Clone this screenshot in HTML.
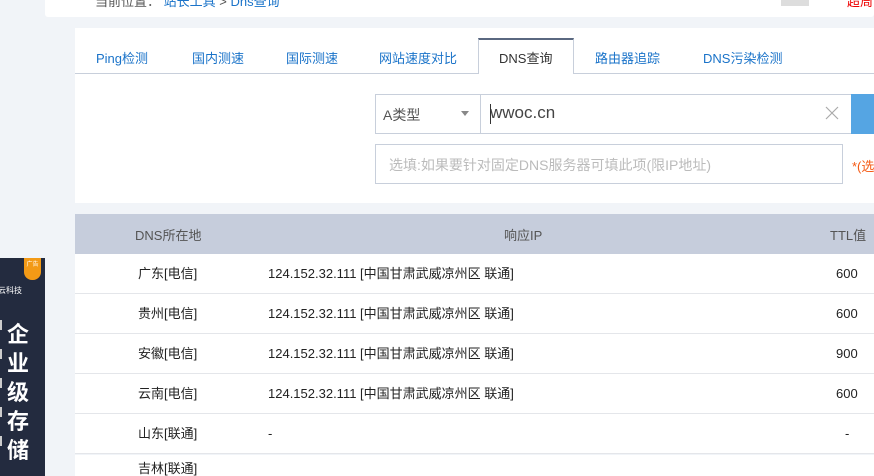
<!DOCTYPE html>
<html><head><meta charset="utf-8"><style>
*{margin:0;padding:0;box-sizing:border-box}
html,body{width:874px;height:476px;overflow:hidden}
body{background:#f1f4f8;font-family:"Liberation Sans","Noto Sans CJK SC",sans-serif;position:relative;font-size:13px;color:#333;white-space:nowrap}
.a{position:absolute}
.card{background:#fff}
.tab{position:absolute;top:48px;font-size:13px;color:#1a73c9}
.row{position:absolute;left:75px;width:799px;height:40px;background:#fff;border-bottom:1px solid #e4e6ea;font-size:13px;color:#222}
.row span{position:absolute;top:0;line-height:39px}
</style></head><body>
<div class="a card" style="left:45px;top:-10px;width:829px;height:27px;border-radius:3px"></div>
<div class="a" style="left:95px;top:-9px;font-size:13px;color:#555">当前位置： <span style="color:#1a73c9">站长工具</span> &gt; <span style="color:#1a73c9">Dns查询</span></div>
<div class="a" style="left:781px;top:-8px;width:28px;height:14px;background:#ddd"></div>
<div class="a" style="left:847px;top:-9px;color:#e00;font-size:13px">超周</div>

<div class="a card" style="left:75px;top:28px;width:799px;height:175px"></div>
<div class="a" style="left:75px;top:73px;width:799px;height:1px;background:#c8cfdb"></div>
<div class="a" style="left:478px;top:38px;width:96px;height:36px;background:#fff;border:1px solid #c8cfdb;border-top:2px solid #5a6880;border-bottom:none"></div>
<div class="tab" style="left:96px">Ping检测</div>
<div class="tab" style="left:192px">国内测速</div>
<div class="tab" style="left:286px">国际测速</div>
<div class="tab" style="left:379px">网站速度对比</div>
<div class="tab" style="left:499px;color:#333">DNS查询</div>
<div class="tab" style="left:595px">路由器追踪</div>
<div class="tab" style="left:703px">DNS污染检测</div>

<div class="a" style="left:375px;top:94px;width:480px;height:40px;border:1px solid #c8cfdb;background:#fff"></div>
<div class="a" style="left:480px;top:95px;width:1px;height:38px;background:#c8cfdb"></div>
<div class="a" style="left:383px;top:105px;font-size:14px;color:#555">A类型</div>
<div class="a" style="left:461px;top:111px;width:0;height:0;border-left:4px solid transparent;border-right:4px solid transparent;border-top:5px solid #888"></div>
<div class="a" style="left:490px;top:103px;font-size:17px;color:#444">wwoc.cn</div>
<div class="a" style="left:490px;top:104px;width:1px;height:20px;background:#333"></div>
<svg class="a" style="left:825px;top:106px" width="14" height="14"><path d="M1 1L13 13M13 1L1 13" stroke="#aaa" stroke-width="1.2"/></svg>
<div class="a" style="left:851px;top:94px;width:23px;height:40px;background:#55a5e3"></div>
<div class="a" style="left:375px;top:144px;width:468px;height:40px;border:1px solid #c8cfdb"></div>
<div class="a" style="left:389px;top:155px;font-size:14px;color:#bbb">选填:如果要针对固定DNS服务器可填此项(限IP地址)</div>
<div class="a" style="left:852px;top:156px;font-size:13px;color:#f55a14">*(选</div>

<div class="a" style="left:75px;top:214px;width:799px;height:40px;background:#c6cddc"></div>
<div class="a" style="left:135px;top:225px;color:#555">DNS所在地</div>
<div class="a" style="left:504px;top:225px;color:#555">响应IP</div>
<div class="a" style="left:830px;top:225px;color:#555">TTL值</div>

<div class="row" style="top:254px"><span style="left:63px">广东[电信]</span><span style="left:193px">124.152.32.111 [中国甘肃武威凉州区 联通]</span><span style="left:761px">600</span></div>
<div class="row" style="top:294px"><span style="left:63px">贵州[电信]</span><span style="left:193px">124.152.32.111 [中国甘肃武威凉州区 联通]</span><span style="left:761px">600</span></div>
<div class="row" style="top:334px"><span style="left:63px">安徽[电信]</span><span style="left:193px">124.152.32.111 [中国甘肃武威凉州区 联通]</span><span style="left:761px">900</span></div>
<div class="row" style="top:374px"><span style="left:63px">云南[电信]</span><span style="left:193px">124.152.32.111 [中国甘肃武威凉州区 联通]</span><span style="left:761px">600</span></div>
<div class="row" style="top:414px"><span style="left:63px">山东[联通]</span><span style="left:193px">-</span><span style="left:770px">-</span></div>
<div class="row" style="top:455px"><span style="left:63px;line-height:28px">吉林[联通]</span></div>

<div class="a" style="left:0;top:258px;width:45px;height:218px;background:#232b3f;overflow:hidden">
<div class="a" style="left:24px;top:0;width:17px;height:22px;background:#f39a16;border-radius:0 0 8px 8px;color:#fff;font-size:6px;text-align:center;line-height:14px">广告</div>
<div class="a" style="left:-2px;top:27px;color:#fff;font-size:8px">云科技</div>
<div class="a" style="left:7px;top:62px;width:20px;color:#fff;font-size:22px;font-weight:bold;line-height:29px;white-space:normal">企业级存储</div>
<div class="a" style="left:-2px;top:62px;width:4px;height:145px;background:repeating-linear-gradient(#ccc 0 10px,transparent 10px 29px)"></div>
</div>
</body></html>
